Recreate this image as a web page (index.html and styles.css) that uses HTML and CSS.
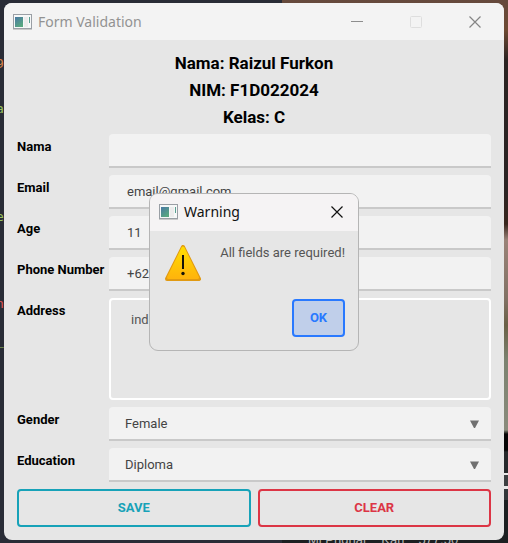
FILE: index.html
```html
<!DOCTYPE html>
<html lang="en">
<head>
<meta charset="utf-8">
<meta name="viewport" content="width=device-width, initial-scale=1">
<title>Form Validation</title>
<link rel="stylesheet" href="styles.css">
</head>
<body>
<svg width="0" height="0" class="defs" aria-hidden="true">
  <defs>
    <linearGradient id="teal" x1="0" y1="0" x2="0.6" y2="1">
      <stop offset="0" stop-color="#4a78a4"/>
      <stop offset="1" stop-color="#58a880"/>
    </linearGradient>
    <linearGradient id="amber" x1="0" y1="0" x2="0" y2="1">
      <stop offset="0" stop-color="#ffdc00"/>
      <stop offset="1" stop-color="#ffb50c"/>
    </linearGradient>
    <symbol id="app-icon" viewBox="0 0 19 16">
      <rect x="0.5" y="0.5" width="18" height="14" fill="#f6f8f8" stroke="#9a9fa5"/>
      <path d="M0 15.5h19" stroke="#c9c9c9"/>
      <rect x="2" y="3" width="8" height="10" fill="url(#teal)"/>
      <rect x="11" y="3" width="4" height="10" fill="#ececec"/>
      <rect x="16" y="3" width="1" height="6" fill="#5a9f90"/>
    </symbol>
  </defs>
</svg>
<div class="desktop">
  <div class="backdrop" aria-hidden="true">
    <span class="code code-number">9</span>
    <span class="code code-string">a</span>
    <span class="code code-string code-low">e</span>
    <span class="code code-name">n</span>
    <span class="code code-string code-dash">_</span>
    <div class="photo"></div>
    <div class="panel"><span>Mi Pngnar</span><span>Karl</span><span>577.50</span></div>
  </div>

  <main class="window">
    <header class="titlebar">
      <svg class="app-icon" aria-hidden="true"><use href="#app-icon"/></svg>
      <span class="title">Form Validation</span>
      <button class="caption" type="button" aria-label="Minimize"><svg width="12" height="12" viewBox="0 0 12 12"><path d="M0 5.5h12" stroke="#8d8d8d"/></svg></button>
      <button class="caption" type="button" aria-label="Maximize" disabled><svg width="12" height="12" viewBox="0 0 12 12"><rect x="0.5" y="0.5" width="11" height="11" rx="1" fill="none" stroke="#dedede"/></svg></button>
      <button class="caption" type="button" aria-label="Close"><svg width="12" height="12" viewBox="0 0 12 12"><path d="M0.5 0.5l11 11M11.5 0.5l-11 11" stroke="#858585" stroke-width="1.2"/></svg></button>
    </header>

    <form class="content">
      <div class="identity">
        <div>Nama: Raizul Furkon</div>
        <div>NIM: F1D022024</div>
        <div>Kelas: C</div>
      </div>
      <div class="fields">
        <label for="nama">Nama</label>
        <input class="field" id="nama" type="text">
        <label for="email">Email</label>
        <input class="field" id="email" type="text" value="email@gmail.com">
        <label for="age">Age</label>
        <input class="field" id="age" type="text" value="11">
        <label for="phone">Phone Number</label>
        <input class="field" id="phone" type="text" value="+62">
        <label for="address">Address</label>
        <textarea id="address">indonesia</textarea>
        <label for="gender">Gender</label>
        <div class="select">
          <select class="field" id="gender"><option>Female</option><option>Male</option></select>
          <svg class="arrow" viewBox="0 0 9 8" aria-hidden="true"><path d="M0 0.5h9L5 8h-1z" fill="#707070"/></svg>
        </div>
        <label for="education">Education</label>
        <div class="select">
          <select class="field" id="education"><option>Diploma</option></select>
          <svg class="arrow" viewBox="0 0 9 8" aria-hidden="true"><path d="M0 0.5h9L5 8h-1z" fill="#707070"/></svg>
        </div>
      </div>
      <div class="actions">
        <button class="button save" type="button">SAVE</button>
        <button class="button clear" type="button">CLEAR</button>
      </div>
    </form>

    <section class="dialog" role="alertdialog" aria-labelledby="dialog-title" aria-describedby="dialog-text">
      <header class="titlebar dialog-bar">
        <svg class="app-icon" aria-hidden="true"><use href="#app-icon"/></svg>
        <span class="title" id="dialog-title">Warning</span>
        <button class="caption" type="button" aria-label="Close"><svg width="12" height="12" viewBox="0 0 12 12"><path d="M0.5 0.5l11 11M11.5 0.5l-11 11" stroke="#111" stroke-width="1.2"/></svg></button>
      </header>
      <div class="message">
        <svg class="alert" viewBox="0 0 36 36" aria-hidden="true">
          <path d="M18 2L34 34H2z" fill="#e19a12" stroke="#e19a12" stroke-width="4" stroke-linejoin="round"/>
          <path d="M18 3L32.5 32.5H3.5z" fill="url(#amber)" stroke="url(#amber)" stroke-width="3" stroke-linejoin="round"/>
          <path d="M18 10v14" stroke="#15130a" stroke-width="2"/>
          <circle cx="18" cy="28.5" r="1.7" fill="#15130a"/>
        </svg>
        <p id="dialog-text">All fields are required!</p>
      </div>
      <div class="dialog-actions"><button class="button ok" type="button">OK</button></div>
    </section>
  </main>
</div>
</body>
</html>
```
FILE: styles.css
```css
* { box-sizing: border-box; }

body {
  margin: 0;
  font-family: Roboto, "Liberation Sans", sans-serif;
  font-size: 13px;
  color: #555;
}

.defs { position: absolute; }

.desktop {
  position: relative;
  min-height: 100vh;
  padding: 3px 4px;
  background: #292c36;
  overflow: hidden;
}

.backdrop {
  position: absolute;
  inset: 0;
  overflow: hidden;
}

.code {
  position: absolute;
  left: -4px;
  font: 13px/16px "DejaVu Sans Mono", monospace;
}
.code-number { top: 56px; color: #d5824a; }
.code-string { top: 101px; color: #98c060; }
.code-low { top: 209px; }
.code-name { top: 296px; color: #e05555; }
.code-dash { top: 333px; }

.photo {
  position: absolute;
  top: 0;
  right: 0;
  bottom: 0;
  width: 226px;
  background: linear-gradient(#65493c 0, #6e4a33 30px, #2b2322 60px, #2b2424 190px, #39261d 224px, #9a8378 240px, #817164 300px, #6a6046 325px, #7b8270 360px, #8a8b7c 430px, #050505 434px, #050505 450px, #26292b 452px, #26292b 473px, #e8e8e8 473px, #e8e8e8 475px, #3c3f41 475px, #3c3f41 486px, #e8e8e8 486px, #e8e8e8 489px, #33373a 489px, #33373a 500px, #1c1f21 500px);
}

.panel {
  position: absolute;
  right: 0;
  bottom: -4px;
  width: 200px;
  display: flex;
  gap: 14px;
  font: 13px/15px "Liberation Sans", sans-serif;
  color: #b5b5b5;
}

.window {
  position: relative;
  border-radius: 8px;
  background: #e6e6e6;
  overflow: hidden;
}

.titlebar {
  display: flex;
  align-items: center;
  height: 37px;
  padding-left: 9px;
  background: #f3f3f3;
  color: #929292;
  font: 14px/18px "Noto Sans", "Open Sans", sans-serif;
}

.title { flex: 1; }

.app-icon {
  width: 19px;
  height: 16px;
  margin-right: 6px;
}

.caption {
  display: flex;
  align-items: center;
  justify-content: center;
  width: 59px;
  height: 36px;
  padding: 0;
  border: 0;
  background: none;
}

.content { padding: 10px 13px 13px; }

.identity {
  margin-bottom: 3px;
  text-align: center;
  font-size: 17px;
  font-weight: 700;
  line-height: 27px;
  color: #000;
}

.fields {
  display: grid;
  grid-template-columns: 85px 1fr;
  gap: 7px;
}

label {
  padding-top: 5px;
  font-weight: 700;
  line-height: 15px;
  color: #000;
  white-space: nowrap;
}

.field {
  display: block;
  width: 100%;
  height: 34px;
  padding: 0 18px;
  border: 0;
  border-bottom: 2px solid #c9c9c9;
  border-radius: 4px 4px 0 0;
  background: #f2f2f2;
  color: #444;
  font: inherit;
  outline: 0;
}

.select { position: relative; }

select.field {
  appearance: none;
  padding: 0 16px;
}

.arrow {
  position: absolute;
  top: 13px;
  right: 12px;
  width: 9px;
  height: 8px;
  pointer-events: none;
}

textarea {
  display: block;
  width: 100%;
  height: 102px;
  padding: 12px 20px;
  border: 2px solid #fff;
  border-radius: 4px;
  background: #e6e6e6;
  color: #555;
  font: inherit;
  line-height: 15px;
  resize: none;
  outline: 0;
}

.actions {
  display: flex;
  gap: 7px;
  margin-top: 7px;
}

.button {
  height: 38px;
  padding: 0;
  border: 2px solid currentColor;
  border-radius: 4px;
  background: transparent;
  font: 700 13px/16px Roboto, "Liberation Sans", sans-serif;
}

.actions .button { flex: 1; }
.save { color: #17a2b8; }
.clear { color: #dc3545; }

.dialog {
  position: absolute;
  inset: 0;
  width: 210px;
  height: fit-content;
  margin: auto;
  border: 1px solid #b5b5b5;
  border-radius: 9px;
  background: #e6e6e6;
  overflow: hidden;
}

.dialog-bar {
  background: #f5f3f4;
  color: #111;
}

.dialog-bar .caption { width: 42px; }

.message {
  display: flex;
  justify-content: space-between;
  padding: 14px 13px 0 15px;
}

.message p {
  margin: 0;
  line-height: 15px;
}

.alert {
  width: 36px;
  height: 36px;
}

.dialog-actions {
  display: flex;
  justify-content: flex-end;
  padding: 18px 13px 13px;
}

.ok {
  width: 53px;
  color: #2979ff;
  background: #c0cfea;
}
```
